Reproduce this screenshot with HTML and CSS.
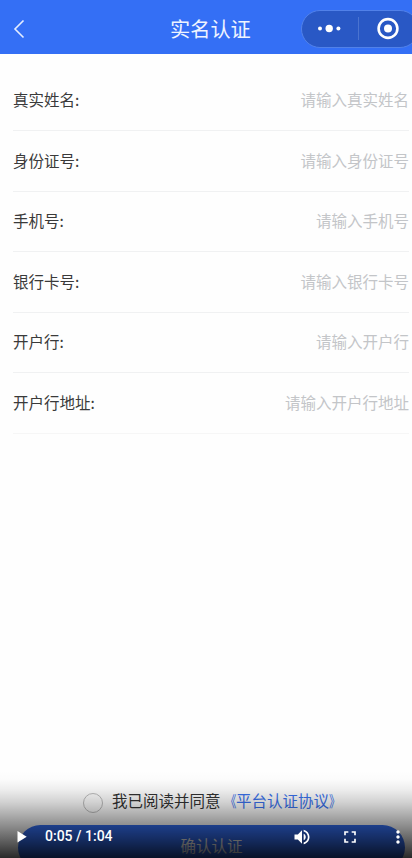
FILE: index.html
```
<!DOCTYPE html>
<html lang="zh-CN">
<head>
<meta charset="utf-8">
<title>实名认证</title>
<link rel="stylesheet" href="styles.css">
</head>
<body>
<div class="screen">
  <header class="navbar">
    <svg class="back" width="12" height="20" viewBox="0 0 12 20"><path d="M10.5 1.5 2 10l8.5 8.5"/></svg>
    <h1 class="title">实名认证</h1>
    <div class="capsule">
      <svg class="dots" width="26" height="10" viewBox="0 0 26 10"><circle cx="4" cy="4.5" r="2"/><circle cx="13.2" cy="4.5" r="3.7"/><circle cx="22.4" cy="4.5" r="2"/></svg>
      <span class="divider"></span>
      <svg class="target" width="24" height="24" viewBox="0 0 24 24"><circle class="ring" cx="12" cy="11.5" r="9.4"/><circle cx="12" cy="11.5" r="4"/></svg>
    </div>
  </header>
  <main class="form">
    <div class="row"><span>真实姓名:</span><span class="hint">请输入真实姓名</span></div>
    <div class="row"><span>身份证号:</span><span class="hint">请输入身份证号</span></div>
    <div class="row"><span>手机号:</span><span class="hint">请输入手机号</span></div>
    <div class="row"><span>银行卡号:</span><span class="hint">请输入银行卡号</span></div>
    <div class="row"><span>开户行:</span><span class="hint">请输入开户行</span></div>
    <div class="row"><span>开户行地址:</span><span class="hint">请输入开户行地址</span></div>
  </main>
  <footer class="footer">
    <div class="agreement"><span class="radio"></span><span>我已阅读并同意</span><span class="link"><span class="mark open">《</span>平台认证协议<span class="mark">》</span></span></div>
    <div class="submit">确认认证</div>
  </footer>
  <div class="player">
    <svg class="play" width="10" height="12" viewBox="0 0 10 12"><path d="M0.5 0v11.5L9.7 5.7z"/></svg>
    <span class="time">0:05 / 1:04</span>
    <svg class="volume" width="20" height="20" viewBox="0 0 24 24"><path d="M3 9v6h4l5 5V4L7 9H3zm13.5 3c0-1.77-1.02-3.29-2.5-4.03v8.05c1.48-.73 2.5-2.25 2.5-4.02zM14 3.23v2.06c2.89.86 5 3.54 5 6.71s-2.11 5.85-5 6.71v2.06c4.01-.91 7-4.49 7-8.77s-2.99-7.86-7-8.77z"/></svg>
    <svg class="full" width="20" height="20" viewBox="0 0 24 24"><path d="M7 14H5v5h5v-2H7v-3zm-2-4h2V7h3V5H5v5zm12 7h-3v2h5v-5h-2v3zM14 5v2h3v3h2V5h-5z"/></svg>
    <svg class="more" width="20" height="20" viewBox="0 0 24 24"><path d="M12 8c1.1 0 2-.9 2-2s-.9-2-2-2-2 .9-2 2 .9 2 2 2zm0 2c-1.1 0-2 .9-2 2s.9 2 2 2 2-.9 2-2-.9-2-2-2zm0 6c-1.1 0-2 .9-2 2s.9 2 2 2 2-.9 2-2-.9-2-2-2z"/></svg>
  </div>
</div>
</body>
</html>
```
FILE: styles.css
```
* { box-sizing: border-box; }
body {
  margin: 0;
  font-family: "Noto Sans CJK SC", sans-serif;
  background: #fefefe;
}
svg { display: block; flex: none; }
.screen {
  position: relative;
  width: 412px;
  height: 858px;
  overflow: hidden;
  display: flex;
  flex-direction: column;
}
.navbar {
  flex: none;
  height: 54px;
  display: grid;
  grid-template-columns: 170px 1fr 111px;
  align-items: center;
  background: #346ff5;
  padding-top: 3px;
}
.back {
  margin-left: 13px;
  fill: none;
  stroke: #e4edff;
  stroke-width: 1.6;
}
.title {
  margin: 0;
  font-size: 20.2px;
  line-height: 30px;
  font-weight: 400;
  color: #eef4ff;
  white-space: nowrap;
}
.capsule {
  width: 118px;
  height: 38px;
  border: 1px solid #5181e9;
  border-radius: 19px;
  background: #2958c5;
  display: flex;
  align-items: center;
}
.dots { margin-left: 14px; fill: #fff; }
.divider { width: 1px; height: 23px; margin-left: 16px; background: #4a73d0; }
.target { margin-left: 17px; fill: #fff; }
.ring { fill: none; stroke: #fff; stroke-width: 2.6; }
.form {
  flex: 1;
  padding: 16.5px 3px 0 13px;
}
.row {
  height: 60.5px;
  padding-bottom: 2px;
  display: flex;
  justify-content: space-between;
  align-items: center;
  border-bottom: 1px solid #f0f1f2;
  font-size: 15.5px;
  line-height: 24px;
  color: #3a3a3a;
  white-space: nowrap;
}
.row:last-child { border-color: #f6f6f6; }
.hint { color: #c3c5c8; }
.footer {
  flex: none;
  height: 70px;
}
.agreement {
  height: 37px;
  padding-left: 83px;
  display: flex;
  align-items: flex-start;
  font-size: 15.5px;
  line-height: 24px;
  color: #333;
  white-space: nowrap;
}
.radio {
  width: 20px;
  height: 20px;
  margin: 5px 9px 0 0;
  border: 1px solid #bdbdbd;
  border-radius: 50%;
}
.link { color: #3a72ee; }
.mark {
  display: inline-block;
  width: 15.5px;
  transform: scaleX(.72);
  transform-origin: left center;
}
.open { transform-origin: right center; }
.submit {
  height: 45px;
  margin: 0 7px 0 18px;
  border-radius: 23px;
  background: #346ff5;
  color: #fff;
  font-size: 15.5px;
  line-height: 41px;
  text-align: center;
}
.player {
  position: absolute;
  left: 0;
  right: 0;
  bottom: 0;
  height: 88px;
  padding-top: 46px;
  display: flex;
  align-items: center;
  background: linear-gradient(to bottom, transparent 0, rgba(0,0,0,.01) 11%, rgba(0,0,0,.07) 23%, rgba(0,0,0,.18) 37%, rgba(0,0,0,.31) 50%, rgba(0,0,0,.43) 62%, rgba(0,0,0,.62) 80%, rgba(0,0,0,.84) 100%);
  fill: #fff;
}
.play { margin-left: 17px; }
.time {
  width: 90px;
  margin: 0 0 2px 18px;
  font: 500 14px/20px Roboto, sans-serif;
  color: #fff;
  white-space: nowrap;
}
.volume { margin-left: 157px; }
.full { margin-left: 28px; }
.more { margin-left: 28px; }
```
